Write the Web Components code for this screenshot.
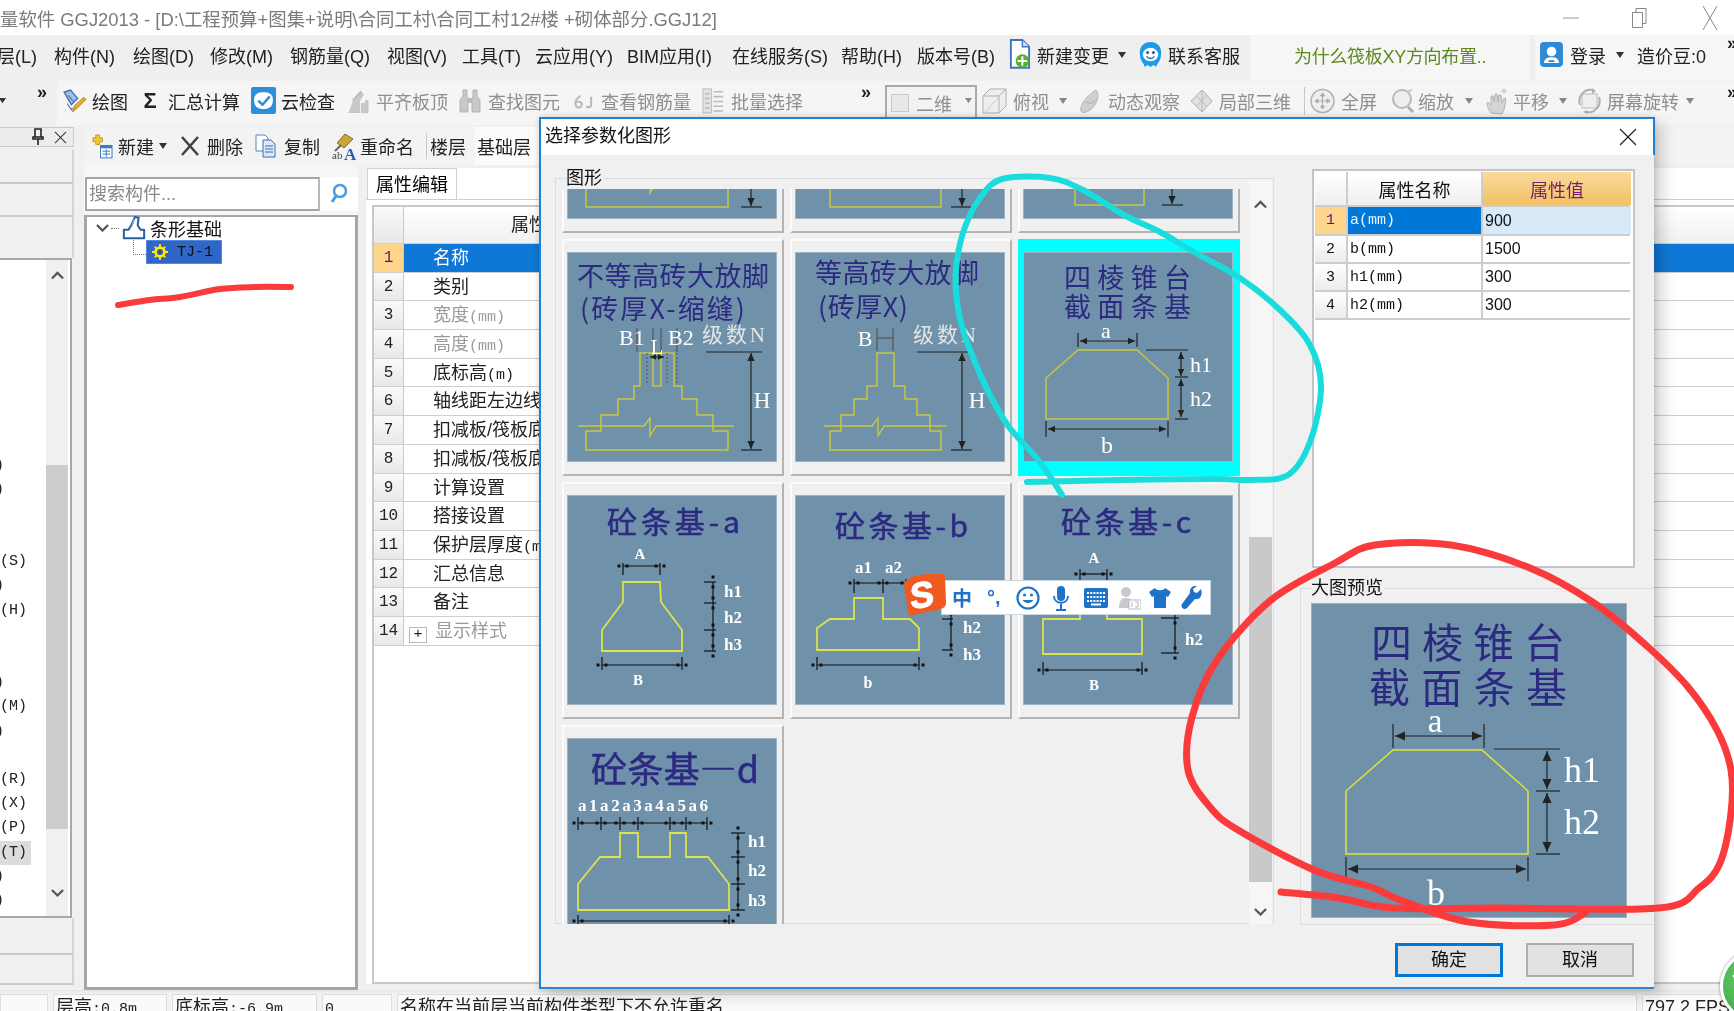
<!doctype html>
<html lang="zh"><head><meta charset="utf-8"><title>GGJ2013</title>
<style>html,body{margin:0;padding:0;height:100%;overflow:hidden;background:#f0f0f0;font:18px "Liberation Sans","Noto Sans CJK SC",sans-serif}</style>
</head><body><gg-app></gg-app>
<script>
const F='"Liberation Sans","Noto Sans CJK SC",sans-serif';
const MONO='"Liberation Mono","Noto Sans CJK SC",monospace';
const SERIF='"Liberation Serif","Noto Sans CJK SC",serif';
const CJK='"Noto Sans CJK SC",sans-serif';
const ICONS={
 caret:[8,6,'<path d="M0 0h8L4 6z" fill="#333"/>'],
 caretg:[8,6,'<path d="M0 0h8L4 6z" fill="#888"/>'],
 doc:[24,32,'<path d="M3 1h12l7 7v22H3z" fill="#fff" stroke="#3a78c0" stroke-width="2"/><path d="M15 1v7h7" fill="#cfe2f5" stroke="#3a78c0" stroke-width="1.5"/><circle cx="15" cy="23" r="7" fill="#58b030"/><path d="M15 18v10M10 23h10" stroke="#fff" stroke-width="2"/>'],
 service:[26,28,'<path d="M13 1C5 1 1 7 2 14c0 7 5 10 5 13l3-2 3 2 3-2 3 2c0-3 5-6 5-13C25 7 21 1 13 1z" fill="#1e9be8"/><ellipse cx="13" cy="14" rx="8" ry="7" fill="#fff"/><circle cx="10" cy="12" r="1.6" fill="#1565a8"/><circle cx="16" cy="12" r="1.6" fill="#1565a8"/><path d="M9 16c2 3 6 3 8 0" stroke="#1565a8" fill="none" stroke-width="1.4"/>'],
 login:[24,26,'<rect width="24" height="26" rx="4" fill="#2f8ad6"/><circle cx="12" cy="10" r="5" fill="#fff"/><path d="M4 22c1-5 4-6 8-6s7 1 8 6z" fill="#fff"/><path d="M9 20h6" stroke="#2f8ad6" stroke-width="2"/>'],
 draw:[24,24,'<path d="M2 3l6-2 7 8-6 6z" fill="#9fc0e8" stroke="#3a6ab0" stroke-width="1.2"/><path d="M6 6l5 6" stroke="#3a6ab0"/><path d="M5 14l4 6 1-2" stroke="#3a6ab0" fill="none"/><path d="M10 22l2-6 9-8 2 2-9 9z" fill="#e6ad2c" stroke="#a87610" stroke-width=".8"/>'],
 sigma:[16,24,'<text x="8" y="19" font-family="Liberation Sans" font-size="22" font-weight="700" text-anchor="middle" fill="#222">Σ</text>'],
 cloud:[24,26,'<rect width="24" height="26" rx="2" fill="#2b8fdc"/><rect x="3" y="5" width="18" height="16" rx="7" fill="#fff"/><path d="M7 13l4 4 7-8" stroke="#2b8fdc" stroke-width="2.4" fill="none"/>'],
 align:[24,26,'<path d="M2 25L8 9l6-7 3 4-4 7v12zM15 25V15h3v10zM19 25V12h3v13z" fill="#c9c9c9" stroke="#b5b5b5" stroke-width=".6"/><path d="M5 12l10-9" stroke="#aaa"/>'],
 binoc:[24,26,'<path d="M5 2h4v6l1 4v12H2V12l3-4zM15 2h4v6l3 4v12h-8V12l1-4z" fill="#c8c8c8" stroke="#aaa" stroke-width=".8"/><rect x="10" y="10" width="4" height="5" fill="#bbb"/>'],
 rebar:[24,24,'<path d="M9 6C4 9 3 13 4 16s5 3 6 0-2-5-5-3M20 7v8c0 3-3 4-5 2" fill="none" stroke="#b8b8b8" stroke-width="2"/>'],
 batch:[24,28,'<rect x="1" y="1" width="9" height="25" fill="#e2e2e2" stroke="#bbb"/><path d="M12 4h10M12 9h10M12 14h10M12 19h10M12 24h10M3 6h5M3 11h5M3 16h5M3 21h5" stroke="#bbb" stroke-width="1.6"/>'],
 square:[18,18,'<rect x=".5" y=".5" width="17" height="17" fill="#e8e8e8" stroke="#ccc"/>'],
 cube:[25,26,'<path d="M1 8l7-7h16v17l-7 7H1z" fill="#eee" stroke="#b0b0b0"/><path d="M1 8h16v17M17 8l7-7" fill="none" stroke="#b0b0b0"/><path d="M3 24l14-15" stroke="#ccc"/>'],
 orbit:[24,26,'<path d="M18 2c4 4 2 14-6 20-3 2-8 4-9 1-2-5 6-16 15-21z" fill="#d0d0d0" stroke="#b5b5b5"/><path d="M8 14c3 2 7 1 9-2" stroke="#aaa" fill="none"/>'],
 dia:[23,24,'<path d="M12 1l10 11-10 11L1 12z" fill="#e0e0e0" stroke="#b0b0b0"/><path d="M6 6l11 12M17 6L6 18M12 1v22" stroke="#bbb" fill="none"/>'],
 full:[25,26,'<circle cx="12.5" cy="13" r="11.5" fill="#eee" stroke="#b0b0b0" stroke-width="1.5"/><path d="M12.5 5v16M5 13h15M12.5 5l-2 3h4zM12.5 21l-2-3h4zM5 13l3-2v4zM20 13l-3-2v4z" fill="#bbb" stroke="#aaa"/>'],
 zoom:[25,26,'<circle cx="12" cy="11" r="9" fill="#eee" stroke="#b8b8b8" stroke-width="2"/><path d="M18 19l5 5" stroke="#b0b0b0" stroke-width="3"/><path d="M17 4l5-2" stroke="#ccc" stroke-width="2"/>'],
 pan:[25,28,'<path d="M6 26c-4-6-5-10-3-11l3 3V9l2 0 1 6 1-8h2l1 8 1-7h2l1 8 2-5 2 1-2 11-2 4z" fill="#d4d4d4" stroke="#b5b5b5"/><path d="M19 1v6M16 4h6" stroke="#bbb"/>'],
 rot:[25,26,'<rect x="5" y="6" width="15" height="14" fill="#eee" stroke="#bbb"/><path d="M3 17C0 8 8 0 16 2M22 9c3 9-5 17-13 15" fill="none" stroke="#b0b0b0" stroke-width="2"/><path d="M15 0l4 3-4 3zM10 22l-4 2 4 2z" fill="#b0b0b0"/>'],
 add:[24,28,'<path d="M3 5h3V2h4v3h3v4h-3v3H6V9H3z" fill="#f0c92c" stroke="#b08a10" stroke-width=".8"/><rect x="11" y="13" width="12" height="13" fill="#fff" stroke="#3a78c0"/><rect x="11" y="13" width="12" height="3" fill="#3a78c0"/><path d="M13 19h8M13 22h8M17 17v8" stroke="#3a78c0"/>'],
 del:[20,24,'<path d="M2 3l16 18M18 3L2 21" stroke="#444" stroke-width="2.6"/>'],
 copy:[21,24,'<path d="M1 1h9l3 3v13H1z" fill="#fff" stroke="#5a84b8"/><path d="M8 6h8l4 4v13H8z" fill="#dbe9f8" stroke="#3a6ab0"/><path d="M10 12h8M10 15h8M10 18h8" stroke="#3a6ab0"/>'],
 rename:[25,30,'<path d="M6 12l8-9 8 5-9 9z" fill="#c8a43a" stroke="#8a7020"/><path d="M4 20l6-6" stroke="#666" stroke-width="2"/><text x="1" y="28" font-size="11" font-family="Liberation Serif" fill="#444">ab</text><text x="13" y="29" font-size="17" font-family="Liberation Serif" font-weight="700" fill="#2a5fb0">A</text>'],
 search:[18,22,'<circle cx="10" cy="8" r="6" fill="none" stroke="#4c9de0" stroke-width="2.6"/><path d="M6 13l-4 6" stroke="#4c9de0" stroke-width="3"/>'],
 found:[26,26,'<path d="M14 1l4 1-1 8 3 5h4v9H2v-9h5l3-5z" fill="#fff" stroke="#2a5fa8" stroke-width="2.2" stroke-linejoin="round"/><path d="M13 3l-2 7" stroke="#7aa0d0" stroke-width="1.5"/>'],
 gear:[18,18,'<circle cx="9" cy="9" r="5" fill="none" stroke="#ffe800" stroke-width="3"/><path d="M9 0v4M9 14v4M0 9h4M14 9h4M3 3l3 3M12 12l3 3M15 3l-3 3M3 15l3-3" stroke="#ffe800" stroke-width="2"/><circle cx="9" cy="9" r="2" fill="#5a5020"/>'],
 pin:[12,18,'<path d="M3 1h6v8H3zM1 9h10v2H1zM6 11v6" stroke="#222" stroke-width="1.6" fill="#eee"/>'],
 x:[14,14,'<path d="M1 1l12 12M13 1L1 13" stroke="#333" stroke-width="1.1"/>'],
 chevU:[14,9,'<path d="M1 8l6-6 6 6" fill="none" stroke="#555" stroke-width="2.4"/>'],
 chevD:[14,9,'<path d="M1 1l6 6 6-6" fill="none" stroke="#555" stroke-width="2.4"/>'],
 none:[1,1,'']
};
function icon(n,w){const a=ICONS[n];const h=Math.round(w*a[1]/a[0]*10)/10;return `<svg xmlns="http://www.w3.org/2000/svg" width="${w}" height="${h}" viewBox="0 0 ${a[0]} ${a[1]}" style="flex:none;display:block">${a[2]}</svg>`}
function def(name,css,html,init){customElements.define(name,class extends HTMLElement{constructor(){super();this.attachShadow({mode:'open'});this.shadowRoot.innerHTML=`<style>${css}</style>`+(typeof html==='function'?html(this):html);}connectedCallback(){if(init&&!this._i){this._i=1;init(this)}}})}

customElements.define('gg-tool',class extends HTMLElement{constructor(){super();this.attachShadow({mode:'open'})}
 connectedCallback(){const n=this.getAttribute('icon'),iw=+this.getAttribute('iw')||24,g=this.getAttribute('gap')||5;
  this.shadowRoot.innerHTML=`<style>:host{display:inline-flex;align-items:center;flex:none;white-space:nowrap;height:100%;font:18px ${F};color:#222;gap:${g}px}:host([dis]){color:#8f8f8f}</style>${n?icon(n,iw):''}<slot></slot>`}});
function place(bar,list){let c=0;for(const it of list){const [x,w,ic,label,o={}]=it;const t=document.createElement('gg-tool');t.style.marginLeft=(x-c)+'px';t.style.width=w+'px';if(ic){t.setAttribute('icon',ic);t.setAttribute('iw',o.iw||24);if(o.gap!=null)t.setAttribute('gap',o.gap)}if(o.dis)t.setAttribute('dis','');if(o.style)t.style.cssText+=o.style;if(label)t.textContent=label;bar.appendChild(t);c=x+w}}

def('gg-bar',`:host{display:flex;align-items:center;overflow:hidden;flex:none;box-sizing:border-box}`,`<slot></slot>`);

def('gg-titlebar',`:host{display:flex;align-items:center;height:35px;background:#fff;flex:none;overflow:hidden;position:relative}
 .t{font:18.4px ${F};color:#7b7b7b;white-space:nowrap;margin-top:0}
 .w{margin-left:auto;display:flex;align-items:center}
 .c{width:70px;display:flex;justify-content:center}`,
 `<div class="t">量软件 GGJ2013 - [D:\\工程预算+图集+说明\\合同工村\\合同工村12#楼 +砌体部分.GGJ12]</div>
 <div class="w"><div class="c"><svg width="16" height="2"><path d="M0 1h16" stroke="#999"/></svg></div>
 <div class="c" style="margin-left:-1px"><svg width="16" height="24"><path d="M.5 6.500h10v15H.5zM4 6V2.500h10v15h-3" fill="none" stroke="#888"/></svg></div>
 <div class="c" style="margin-right:-11px"><svg width="16" height="26"><path d="M1 1l14 24M15 1L1 25" stroke="#888"/></svg></div></div>`);

def('gg-app',`:host{display:flex;flex-direction:column;width:1734px;height:1011px;position:relative;overflow:hidden;background:#f0f0f0;font:18px ${F};filter:blur(.35px)}
 .main{display:flex;height:865px;flex:none}
 .right{margin-left:10px;flex:1;display:flex;flex-direction:column;min-width:0}
 .work{display:flex;flex:1;min-height:0}
 gg-tree{width:274px}
 gg-props{flex:1;margin-left:8px;min-width:0}
 #menu{height:45px;padding-bottom:6px;background:linear-gradient(90deg,#efefef 1250px,#f6f6f6 1250px,#f6f6f6 1530px,#efefef 1530px,#efefef 1535px,#f6f6f6 1535px)}
 #tb1{height:44px;margin-top:1px;padding-bottom:4px;background:linear-gradient(90deg,#efefef 57px,#f5f5f5 57px)}
 #tb2{height:38px;margin-top:2px;background:#f3f3f3}`,
 `<gg-titlebar></gg-titlebar>
 <gg-bar id="menu"></gg-bar>
 <gg-bar id="tb1"></gg-bar>
 <div class="main"><gg-left></gg-left><div class="right"><gg-bar id="tb2"></gg-bar><div class="work"><gg-tree></gg-tree><gg-props></gg-props></div></div></div>
 <gg-status></gg-status>
 <gg-dialog></gg-dialog>
 <gg-ink></gg-ink>
 <gg-ime></gg-ime>
 <gg-badge></gg-badge>`,
 h=>{const s=h.shadowRoot;
  place(s.getElementById('menu'),[
   [-21,61,null,'楼层(L)'],[54,64,null,'构件(N)'],[133,62,null,'绘图(D)'],[210,65,null,'修改(M)'],[290,81,null,'钢筋量(Q)'],[387,59,null,'视图(V)'],[462,58,null,'工具(T)'],[535,76,null,'云应用(Y)'],[627,89,null,'BIM应用(I)'],[732,94,null,'在线服务(S)'],[841,61,null,'帮助(H)'],[917,78,null,'版本号(B)'],
   [1008,104,'doc','新建变更',{iw:23,gap:6}],[1118,8,'caret','',{iw:8}],[1138,104,'service','联系客服',{iw:25,gap:5}],
   [1294,194,null,'为什么筏板XY方向布置..',{style:'color:#5c8a1c;letter-spacing:-.3px'}],
   [1540,68,'login','登录',{iw:23,gap:7}],[1616,8,'caret','',{iw:8}],[1637,72,null,'造价豆:0'],[1727,10,null,'»',{style:'font-weight:700;margin-top:-22px'}]
  ]);
  const d={dis:1};
  place(s.getElementById('tb1'),[
   [-1,8,'caret','',{iw:7}],[37,10,null,'»',{style:'font-weight:700;margin-top:-18px'}],
   [62,66,'draw','绘图',{iw:25}],[142,100,'sigma','汇总计算',{iw:16,gap:10}],[251,86,'cloud','云检查',{iw:25}],
   [347,102,'align','平齐板顶',{...d,iw:23,gap:6}],[458,104,'binoc','查找图元',{...d,gap:6}],[572,120,'rebar','查看钢筋量',{...d,iw:23,gap:6}],[702,102,'batch','批量选择',{...d,iw:23,gap:6}],
   [861,10,null,'»',{style:'font-weight:700;margin-top:-18px'}],
   [885,92,'square','二维',{...d,iw:18,gap:7,style:'border:2px solid #aaa;box-sizing:border-box;height:34px;align-self:flex-start;margin-top:4px;background:#f3f3f3;padding-left:4px;border-bottom:none'}],
   [965,8,'caretg','',{iw:7}],
   [982,70,'cube','俯视',{...d,iw:25,gap:6}],[1059,8,'caretg','',{iw:8}],[1078,102,'orbit','动态观察',{...d,gap:6}],[1190,102,'dia','局部三维',{...d,iw:23,gap:6}],
   [1304,1,null,'',{style:'background:#c8c8c8;height:28px;align-self:center'}],
   [1310,68,'full','全屏',{...d,iw:25,gap:6}],[1390,65,'zoom','缩放',{...d,iw:25,gap:3}],[1465,8,'caretg','',{iw:8}],[1485,63,'pan','平移',{...d,iw:25,gap:3}],[1559,8,'caretg','',{iw:8}],[1577,103,'rot','屏幕旋转',{...d,iw:25,gap:5}],[1686,8,'caretg','',{iw:8}],[1727,10,null,'»',{style:'font-weight:700;margin-top:-18px'}]
  ]);
  place(s.getElementById('tb2'),[
   [6,71,'add','新建',{iw:23,gap:5}],[75,8,'caret','',{iw:8}],[96,60,'del','删除',{iw:20,gap:7}],[171,65,'copy','复制',{iw:21,gap:8}],[247,84,'rename','重命名',{iw:25,gap:4}],
   [342,1,null,'',{style:'background:#c8c8c8;height:26px;align-self:center'}],[346,36,null,'楼层'],[391,64,null,'基础层',{style:'background:#fbfbfb;padding-left:2px;box-sizing:border-box'}]
  ]);
 });

def('gg-left',`:host{display:flex;flex-direction:column;width:74px;flex:none}
 .title{height:20px;margin-top:2px;display:flex;align-items:center;justify-content:flex-end;gap:10px;padding-right:6px;border:1px solid #c8c8c8;border-left:none;box-sizing:border-box;background:#ededed}
 .r{border-bottom:2px solid #c9c9c9;box-sizing:border-box;background:#f1f1f1;border-right:2px solid #d5d5d5}
 .list{height:660px;display:flex;background:#fff;border:2px solid #a8a8a8;border-left:none;box-sizing:border-box;width:72px;flex:none;overflow:hidden}
 .rows{width:46px;flex:none;overflow:hidden;font:15px ${MONO};color:#222}
 .row{height:24.2px;line-height:24.2px;white-space:nowrap}
 .row.sel{background:#dcdcdc;width:31px}
 .bar{width:22px;background:#f0f0f0;display:flex;flex-direction:column;align-items:center}
 .thumb{width:100%;height:364px;background:#cdcdcd;margin-top:186px}`,
 ()=>{const m={8:')',9:')',12:'(S)',13:')',14:'(H)',17:')',18:'(M)',19:')',21:'(R)',22:'(X)',23:'(P)',24:'(T)',25:')',26:')'};
  let rows='';for(let i=0;i<27;i++){const t=m[i]||'';rows+=`<div class="row${i==24?' sel':''}" style="${t==')'?'margin-left:-5px':''}">${t}</div>`}
  return `<div class="title">${icon('pin',12)}${icon('x',13)}</div>
  <div class="r" style="height:34px;margin-top:3px"></div><div class="r" style="height:33px"></div><div class="r" style="height:41px;border-bottom:none"></div>
  <div class="list"><div class="rows">${rows}</div><div class="bar"><div style="margin-top:11px">${icon('chevU',13)}</div><div class="thumb"></div><div style="margin-top:60px">${icon('chevD',13)}</div></div></div>
  <div class="r" style="height:37px"></div><div class="r" style="height:30px"></div>`});

def('gg-tree',`:host{display:flex;flex-direction:column;padding-top:12px;box-sizing:border-box;flex:none;background:#f6f6f6}
 .s{display:flex;height:34px;background:#fff;align-items:center;flex:none}
 .in{width:235px;height:34px;margin-left:1px;box-sizing:border-box;border:2px solid #a4a4a4;border-right-color:#b8b8b8;display:flex;align-items:center;padding:0 0 5px 2px;color:#8a8a8a;font:18px ${F}}
 .mg{margin-left:10px}
 .box{flex:1;margin-top:4px;border:3px solid #a6a6a6;border-top-width:2px;background:#fff;box-sizing:border-box;font:18px ${F};color:#111}
 .r1{display:flex;align-items:center;height:24px;margin-left:9px;margin-top:-1px}
 .ch{width:13px}
 .dots{width:8px;border-top:1px dotted #777;margin:0 2px}
 .r2{display:flex;margin-left:46px;height:24px}
 .el{width:12px;height:14px;border-left:1px dotted #777;border-bottom:1px dotted #777}
 .sel{width:76px;height:24px;background:#2f66c8;box-sizing:border-box;border:1px solid #5587de;display:flex;align-items:center;padding-left:5px;gap:9px;color:#111;font:15px ${MONO}}`,
 `<div class="s"><div class="in">搜索构件...</div><div class="mg">${icon('search',18)}</div></div>
 <div class="box"><div class="r1"><div class="ch">${icon('chevD',13)}</div><div class="dots"></div><div style="margin-left:1px">${icon('found',24)}</div><div style="margin-left:4px">条形基础</div></div>
 <div class="r2"><div class="el"></div><div class="sel">${icon('gear',16)}<span>TJ-1</span></div></div></div>`);

def('gg-props',`:host{display:flex;flex-direction:column;background:#fff;margin-top:3px;margin-bottom:6px;position:relative}
 .tab{height:32px;flex:none;display:flex;border-bottom:1px solid #cfcfcf;background:#f4f4f4;box-sizing:border-box}
 .tab b{font:18px ${F};width:90px;margin-left:1px;box-sizing:border-box;text-align:center;line-height:32px;background:#fff;border:1px solid #d0d0d0;border-bottom:none}
 .rest{flex:1;background:#fff}
 .box{flex:1;margin:5px 0 0 6px;border:2px solid #c8c8c8;border-right:none;background:#fff;font:18px ${F};color:#222}
 .r{display:flex;height:28.7px;box-sizing:border-box;border-bottom:1px solid #cfcfcf}
 .h{width:29px;flex:none;background:linear-gradient(#fafafa,#e8e8e8);text-align:center;font:16px/28px ${MONO};border-right:1px solid #c8c8c8}
 .c{flex:1;padding-left:29px;line-height:28px;white-space:nowrap;position:relative}
 .r.head{height:37px}.r.head .c{padding-left:107px;line-height:37px;background:linear-gradient(#fff,#f0f0f0)}
 .r.sel .h{background:#fdd58b;color:#6a0f6a}.r.sel .c{background:#0f78d6;color:#fff}
 .g{color:#9a9a9a}
 .pl{display:inline-block;width:18px;height:16px;border:1px solid #b8b8b8;box-sizing:border-box;text-align:center;font:15px/13px ${MONO};margin:0 8px 0 -24px;color:#222;vertical-align:-1px}
 .m{font:15px ${MONO};color:inherit}`,
 ()=>{const rows=[['名称'],['类别'],['宽度<span class="m">(mm)</span>',1],['高度<span class="m">(mm)</span>',1],['底标高<span class="m">(m)</span>'],['轴线距左边线距离'],['扣减板/筏板底筋'],['扣减板/筏板底筋'],['计算设置'],['搭接设置'],['保护层厚度<span class="m">(mm)</span>'],['汇总信息'],['备注'],['<span class="pl">+</span>显示样式',1]];
  return `<div class="tab"><b>属性编辑</b><div class="rest"></div></div><div class="box"><div class="r head"><div class="h"></div><div class="c">属性名称</div></div>`+rows.map((r,i)=>`<div class="r${i==0?' sel':''}"><div class="h">${i+1}</div><div class="c${r[1]?' g':''}">${r[0]}</div></div>`).join('')+`</div>`});

def('gg-status',`:host{display:flex;height:21px;flex:none;overflow:hidden;background:linear-gradient(#e6e6e6,#f2f2f2 4px);padding-top:4px;box-sizing:border-box;font:18px ${F};color:#222;gap:5px}
 .c{background:#fafafa;border:1px solid #ddd;border-bottom:none;box-sizing:border-box;height:30px;white-space:nowrap;overflow:hidden;padding:0 0 0 2px;line-height:24px;flex:none}
 .m{font:15px ${MONO}}`,
 `<div class="c" style="width:48px"></div><div class="c" style="width:114px">层高<span class="m">:0.8m</span></div><div class="c" style="width:145px">底标高<span class="m">:-6.9m</span></div><div class="c" style="width:70px"><span class="m">0</span></div><div class="c" style="width:1240px">名称在当前层当前构件类型下不允许重名</div><div class="c" style="flex:1;font:15px/24px ${MONO};letter-spacing:.4px">797.2 FPS</div>`);

const num=v=>Math.round(v*100)/100;
const line=(x1,y1,x2,y2,c='#222',w=1.2)=>`<line x1="${x1}" y1="${y1}" x2="${x2}" y2="${y2}" stroke="${c}" stroke-width="${w}"/>`;
const poly=(p,c,w=1.5,cl=true)=>`<${cl?'polygon':'polyline'} points="${p.map(a=>a.join(',')).join(' ')}" fill="none" stroke="${c}" stroke-width="${w}" stroke-linejoin="miter"/>`;
const tri=(x,y,dir,s=7,c='#222')=>{const h=s/2.2;return `<path fill="${c}" d="${dir=='u'?`M${x} ${y}l${-h} ${s}h${2*h}z`:dir=='d'?`M${x} ${y}l${-h} ${-s}h${2*h}z`:dir=='l'?`M${x} ${y}l${s} ${-h}v${2*h}z`:`M${x} ${y}l${-s} ${-h}v${2*h}z`}"/>`};
const vdim=(x,a,b,s=7,c='#222')=>line(x,a,x,b,c)+tri(x,a,'u',s,c)+tri(x,b,'d',s,c);
const hdim=(y,a,b,s=7,c='#222')=>line(a,y,b,y,c)+tri(a,y,'l',s,c)+tri(b,y,'r',s,c);
const sq=(x,y,s=3)=>`<rect x="${x-s/2}" y="${y-s/2}" width="${s}" height="${s}" fill="#111"/>`;
const sv=(x,a,b,ticks,x1,x2)=>line(x,a,x,b,'#111')+ticks.map(t=>line(x1,t,x2,t,'#111')+sq(x,t+5)+sq(x,t-5)).join('');
const sh=(y,ticks,a,b)=>line(ticks[0],y,ticks[ticks.length-1],y,'#111')+ticks.map(t=>line(t,a,t,b,'#111')+sq(t+4,y)+sq(t-4,y)).join('');
const txt=(x,y,s,o={})=>`<text x="${x}" y="${y}" font-size="${o.s||18}" fill="${o.c||'#fff'}" font-family='${o.f||SERIF}' text-anchor="${o.a||'middle'}" dominant-baseline="central" ${o.b?'font-weight="700"':''} ${o.st?`stroke="${o.c}" stroke-width="${o.st}"`:''} ${o.len?`textLength="${o.len}" lengthAdjust="spacing"`:''}>${s}</text>`;
const ttl=(a,b,y,s,size,w)=>txt(a,y-3.5,s,{s:size,c:'#2c2a80',f:CJK,a:'start',len:b-a,st:w?.55:0});
const Y1='#c6c842',Y2='#dbe24c',Y3='#e2e23a';
const steps1=[[73,101],[73,134],[67,134],[67,147],[51,147],[51,163],[34,163],[34,179],[19,179],[19,198],[161,198],[161,179],[146,179],[146,163],[130,163],[130,147],[115,147],[115,134],[107,134],[107,101]];
const steps2=[[82,101],[82,134],[72,134],[72,147],[59,147],[59,163],[46,163],[46,179],[35,179],[35,198],[146,198],[146,179],[135,179],[135,163],[122,163],[122,147],[110,147],[110,134],[99,134],[99,101]];
const FIG={
 a:()=>ttl(10,202,26,'不等高砖大放脚',27)+ttl(13,178,59,'(砖厚X-缩缝)',27)
  +poly(steps1,Y1)+poly([[86,101],[86,134],[94,134],[94,101]],Y1)
  +poly([[11,174],[77,174],[83,166],[83,184],[89,174],[167,174]],Y1,1.4,false)
  +line(70,100,70,76,'#555')+line(86,100,86,76,'#555')+line(94,100,94,76,'#555')+line(110,100,110,76,'#555')
  +`<path d="M80 101l0 32M100 101v32M110 101v32" stroke="#555" stroke-dasharray="2 2"/>`
  +txt(52,85,'B1',{s:22,a:'start'})+txt(90,95,'L',{s:21})+txt(101,85,'B2',{s:22,a:'start'})+hdim(105,83,97,6)
  +txt(135,83,'级数N',{s:21,a:'start',c:'#e4e4e4',len:63})
  +line(139,100,195,100)+vdim(184,101,197,8)+line(174,198,195,198)+txt(195,148,'H',{s:23}),
 b:()=>ttl(20,184,23,'等高砖大放脚',27)+ttl(23,113,57,'(砖厚X)',27)
  +poly(steps2,Y1)+poly([[29,174],[77,174],[83,166],[83,184],[89,174],[152,174]],Y1,1.4,false)
  +line(82,76,82,99,'#555')+line(98,76,98,99,'#555')+line(82,86,98,86,'#555')+txt(70,86,'B',{s:22})
  +txt(118,83,'级数N',{s:21,a:'start',c:'#e4e4e4',len:63})
  +line(122,100,175,100)+vdim(167,101,197,8)+line(156,198,177,198)+txt(182,148,'H',{s:23}),
 c:()=>ttl(41,168,28,'四棱锥台',27)+ttl(41,168,57,'截面条基',27)
  +poly([[55,98],[114,98],[145,126],[145,167],[23,167],[23,126]],Y1)
  +txt(83,78,'a',{s:22})+line(55,81,55,95)+line(114,81,114,95)+hdim(89,57,112,7)
  +line(123,98,165,98)+line(152,125,165,125)+line(152,167,165,167)+vdim(158,100,124,7)+vdim(158,127,165,7)
  +txt(167,112,'h1',{s:22,a:'start'})+txt(167,146,'h2',{s:22,a:'start'})
  +line(23,169,23,185)+line(145,169,145,185)+hdim(177,25,143,7)+txt(84,193,'b',{s:24}),
 d:()=>ttl(40,173,28,'砼条基-a',30,1)
  +poly([[56,87],[93,87],[94,107],[115,135],[115,156],[35,156],[35,135],[56,107]],Y2,1.8)
  +txt(73,59,'A',{s:15,b:1})+sh(71,[56,93],68,80)
  +sv(146,87,156,[87,108,135,156],137,149)
  +txt(157,96,'h1',{s:17,b:1,a:'start'})+txt(157,122,'h2',{s:17,b:1,a:'start'})+txt(157,149,'h3',{s:17,b:1,a:'start'})
  +sh(170,[35,115],162,175)+txt(71,185,'B',{s:15,b:1}),
 e:()=>ttl(40,173,32,'砼条基-b',30,1)
  +poly([[59,103],[88,103],[88,124],[115,124],[124,133],[124,155],[22,155],[22,133],[35,124],[59,124]],Y2,1.8)
  +txt(60,72,'a1',{s:17,b:1,a:'start'})+txt(90,72,'a2',{s:17,b:1,a:'start'})+sh(88,[59,88,111],84,98)
  +sv(156,103,155,[103,124,155],147,158)+txt(168,105,'h1',{s:17,b:1,a:'start'})+txt(168,132,'h2',{s:17,b:1,a:'start'})+txt(168,159,'h3',{s:17,b:1,a:'start'})
  +sh(170,[22,124],162,175)+txt(73,187,'b',{s:16,b:1}),
 f:()=>ttl(38,168,28,'砼条基-c',30,1)
  +poly([[57,88],[84,88],[84,124],[119,124],[119,159],[20,159],[20,124],[57,124]],Y2,1.8)
  +txt(71,63,'A',{s:15,b:1})+sh(79,[57,84],74,86)
  +sv(152,88,158,[123,158],138,156)+txt(162,144,'h2',{s:17,b:1,a:'start'})
  +sh(175,[20,119],167,180)+txt(71,190,'B',{s:15,b:1}),
 g:()=>ttl(24,192,32,'砼条基—d',36,1)
  +poly([[11,146],[33,119],[53,119],[53,95],[71,95],[71,119],[103,119],[103,95],[119,95],[119,119],[141,119],[162,146],[162,172],[11,172]],Y2,1.8)
  +txt(11,67,'a1a2a3a4a5a6',{s:17,b:1,a:'start',len:130})+sh(85,[11,34,53,71,103,119,140],79,92)
  +sv(171,95,172,[95,119,146,172],164,178)
  +txt(181,103,'h1',{s:17,b:1,a:'start'})+txt(181,132,'h2',{s:17,b:1,a:'start'})+txt(181,162,'h3',{s:17,b:1,a:'start'})
  +sh(183,[11,162],177,190),
 a0:()=>poly(steps1,Y1)+poly([[11,174],[77,174],[83,166],[83,184],[89,174],[167,174]],Y1,1.4,false)+vdim(184,101,197,8)+line(174,198,195,198),
 b0:()=>poly(steps2,Y1)+vdim(167,101,197,8)+line(156,198,177,198),
 c0:()=>poly([[52,170],[121,170],[121,196],[52,196]],Y1)+vdim(149,170,195,8)+line(139,196,160,196),
 prev:()=>ttl(60,254,40,'四棱锥台',41)+ttl(58,256,85,'截面条基',41)
  +poly([[82,147],[171,147],[217,188],[217,251],[35,251],[35,188]],Y3,1.5)
  +txt(124,118,'a',{s:33})+line(82,121,82,145)+line(173,121,173,145)+hdim(133,84,171,10)
  +line(183,146,249,146)+line(225,188,249,188)+line(225,251,249,251)+vdim(236,148,186,10)+vdim(236,190,249,10)
  +txt(253,167,'h1',{s:36,a:'start'})+txt(253,219,'h2',{s:36,a:'start'})
  +line(35,254,35,278)+line(217,254,217,278)+hdim(266,37,215,10)+txt(125,290,'b',{s:36})
};
customElements.define('gg-figure',class extends HTMLElement{constructor(){super();this.attachShadow({mode:'open'})}
 connectedCallback(){const k=this.getAttribute('kind'),w=+this.getAttribute('w')||210,h=+this.getAttribute('h')||210;
  this.shadowRoot.innerHTML=`<style>:host{display:block;width:${w}px;height:${h}px;flex:none;background:#6f92aa;outline:1px solid #9fb3c2;outline-offset:-1px}svg{display:block}</style><svg xmlns="http://www.w3.org/2000/svg" width="${w}" height="${h}" viewBox="0 0 ${w} ${h}">${FIG[k]()}</svg>`}});
def('gg-card',`:host{display:block;box-sizing:border-box;height:237px;padding:11px 5px 0 3px;background:#f0f0f0;border:2px solid #fbfbfb;border-right-color:#b4b4b4;border-bottom-color:#b4b4b4}
 :host([sel]){background:#00ffff;border-color:#00ffff;}`,`<slot></slot>`);
def('gg-group',`:host{display:block;box-sizing:border-box;border:1px solid #dcdcdc;position:relative}
 .l{position:absolute;left:10px;top:-11px;background:#f0f0f0;font:18px/20px ${F};color:#111;padding-right:2px}`,
 h=>`<div class="l">${h.getAttribute('label')}</div><slot></slot>`);

def('gg-dialog',`:host{position:absolute;left:539px;top:117px;width:1115px;height:872px;background:#f0f0f0;border-left:2px solid #1d82d6;border-bottom:2px solid #2a86d0;box-sizing:border-box;box-shadow:8px 6px 14px rgba(0,0,0,.18),0 0 6px rgba(0,0,0,.15);display:flex;flex-direction:column;font:18px ${F};color:#111}
 .tb{height:38px;flex:none;background:#fff;border-top:2px solid #1d82d6;border-right:2px solid #1d82d6;box-sizing:border-box;display:flex;align-items:center;justify-content:space-between;padding:0 16px 6px 4px;margin-right:-1px}
 .tb svg{margin-top:6px}
 .body{display:flex;flex:1;min-height:0;padding-left:14px}
 .leftc{width:719px;flex:none}
 .g1{height:746px;margin-top:23px;padding:10px 0 0 6px;display:flex}
 .view{width:683px;height:735px;overflow:hidden;flex:none}
 .grid{display:grid;grid-template-columns:repeat(3,222px);grid-auto-rows:237px;gap:6px;margin-top:-193px}
 .sb{width:23px;margin-left:4px;margin-top:-9px;height:744px;flex:none;background:#f6f6f6;display:flex;flex-direction:column;align-items:center}
 .thumb{width:100%;height:345px;margin-top:309px;background:#c9c9c9;flex:none}
 .rightc{margin-left:26px;width:354px;flex:none;display:flex;flex-direction:column}
 .g2{height:337px;margin-top:20px;padding:14px 0 0 10px;border-right:none}
 .btns{display:flex;justify-content:flex-end;gap:23px;margin-top:18px;padding-right:20px}
 .btn{width:108px;height:34px;box-sizing:border-box;background:#e1e1e1;border:2px solid #adadad;text-align:center;line-height:30px;font-size:18px}
 .btn.ok{border:3px solid #0078d7;line-height:28px}`,
 `<div class="tb"><span>选择参数化图形</span><svg width="18" height="18"><path d="M1 1l16 16M17 1L1 17" stroke="#222" stroke-width="1.2"/></svg></div>
 <div class="body"><div class="leftc"><gg-group label="图形" class="g1"><div class="view"><div class="grid">
  <gg-card><gg-figure kind="a0"></gg-figure></gg-card><gg-card><gg-figure kind="b0"></gg-figure></gg-card><gg-card><gg-figure kind="c0"></gg-figure></gg-card>
  <gg-card><gg-figure kind="a"></gg-figure></gg-card><gg-card><gg-figure kind="b"></gg-figure></gg-card><gg-card sel><gg-figure kind="c"></gg-figure></gg-card>
  <gg-card><gg-figure kind="d"></gg-figure></gg-card><gg-card><gg-figure kind="e"></gg-figure></gg-card><gg-card><gg-figure kind="f"></gg-figure></gg-card>
  <gg-card><gg-figure kind="g"></gg-figure></gg-card>
 </div></div><div class="sb"><div style="height:48px;display:flex;align-items:center">${icon('chevU',13)}</div><div class="thumb"></div><div style="margin-top:26px">${icon('chevD',13)}</div></div></gg-group></div>
 <div class="rightc"><gg-ptable></gg-ptable><gg-group label="大图预览" class="g2"><gg-figure kind="prev" w="316" h="315"></gg-figure></gg-group>
 <div class="btns"><div class="btn ok">确定</div><div class="btn">取消</div></div></div></div>`);

def('gg-ptable',`:host{display:block;height:399px;width:323px;margin:14px 0 0 12px;box-sizing:border-box;background:#fff;border:2px solid #c2c4cc;padding:1px 3px 0 1px;flex:none;font:16px ${F};color:#111}
 .g{display:grid;grid-template-columns:31px 133px 148px;gap:2px;background:#cdcdcd;padding-bottom:2px;grid-template-rows:33px 27px 26px 26px 26px}
 .c{background:#fff;display:flex;align-items:center;padding-left:2px;white-space:nowrap}
 .m{font:15px ${MONO}}
 .hd{background:linear-gradient(#fff,#efefef);justify-content:center;padding:0;font:18px ${F}}
 .v{background:linear-gradient(#fad99a,#f0c266);color:#7a1a6a}
 .rh{background:linear-gradient(#fff,#ebebeb);justify-content:center;padding:0;font:15px ${MONO}}
 .s1{background:#fdd58b;color:#6a0f6a}.s2{background:#0078d7;color:#e8f4ff}.s3{background:#d8e9f7}`,
 `<div class="g"><div class="c hd"></div><div class="c hd">属性名称</div><div class="c hd v">属性值</div>
 <div class="c rh s1">1</div><div class="c m s2">a(mm)</div><div class="c s3">900</div>
 <div class="c rh">2</div><div class="c m">b(mm)</div><div class="c">1500</div>
 <div class="c rh">3</div><div class="c m">h1(mm)</div><div class="c">300</div>
 <div class="c rh">4</div><div class="c m">h2(mm)</div><div class="c">300</div></div>`);

def('gg-ime',`:host{position:absolute;left:903px;top:575px;width:308px;height:41px;display:block;font:700 20px ${F};color:#1e72c8}
 .bar{position:absolute;left:38px;right:0;top:5px;height:35px;background:#fff;border:1px solid #c9d6e4;box-sizing:border-box;display:flex;align-items:center;padding-left:10px}
 .bar>*{flex:none}
 .logo{position:absolute;left:-2px;top:-1px}`,
 `<div class="bar"><span style="width:35px">中</span><span style="width:29px;font-size:20px">°,</span>
 <svg width="24" height="24" viewBox="0 0 24 24" style="margin-right:12px"><circle cx="12" cy="12" r="10.500" fill="#fff" stroke="#1e72c8" stroke-width="2.200"/><circle cx="8.500" cy="9" r="1.500" fill="#1e72c8"/><circle cx="15.500" cy="9" r="1.500" fill="#1e72c8"/><path d="M6.500 14c3 4 8 4 11 0z" fill="#1e72c8"/></svg>
 <svg width="18" height="26" viewBox="0 0 18 26" style="margin-right:14px"><rect x="5" y="1" width="8" height="15" rx="4" fill="#1e72c8"/><path d="M2 11c0 9 14 9 14 0M9 19v5M4 25h10" fill="none" stroke="#1e72c8" stroke-width="2"/></svg>
 <svg width="24" height="20" viewBox="0 0 24 20" style="margin-right:9px"><rect width="24" height="20" rx="2" fill="#1e72c8"/><path d="M3 5h18M3 9h18M3 13h18" stroke="#fff" stroke-width="2" stroke-dasharray="2 1.200"/><path d="M7 16.500h10" stroke="#fff" stroke-width="2"/></svg>
 <svg width="24" height="24" viewBox="0 0 24 24" style="margin-right:8px"><circle cx="9" cy="6" r="5" fill="#c6c9cf"/><path d="M2 22c0-8 3-10 7-10s5 1 6 3v7z" fill="#c6c9cf"/><rect x="12" y="14" width="12" height="9" fill="#fff" stroke="#b8bcc4"/><path d="M15 16v5M18 16h3v5h-3" stroke="#b0b4bc" fill="none"/></svg>
 <svg width="22" height="22" viewBox="0 0 22 22" style="margin-right:10px"><path d="M6 1L0 5l3 5 2-1v12h12V9l2 1 3-5-6-4c-1 3-9 3-10 0z" fill="#1e72c8"/></svg>
 <svg width="22" height="24" viewBox="0 0 22 24"><path d="M20 3l-4 4-3-1-1-3 4-3c-4-1-8 2-7 7L1 18c-2 3 2 7 5 4l8-9c5 1 8-4 6-10z" fill="#1e72c8"/></svg></div>
 <svg class="logo" width="46" height="44" viewBox="0 0 46 44"><path d="M13 2l26-4c3 0 5 2 5 5l1 26c0 3-2 5-5 6l-28 6c-3 1-5-1-5-4L3 11c0-3 2-5 5-6z" fill="#ee5a20"/><text x="23" y="33" font-family="Liberation Sans" font-weight="700" font-size="36" fill="#fff" text-anchor="middle" stroke="#fff" stroke-width="1.2" transform="rotate(-8 23 20) skewX(-6)">S</text></svg>`);

def('gg-badge',`:host{position:absolute;left:1720px;top:950px;width:72px;height:72px;border-radius:50%;background:radial-gradient(circle at 40% 40%,#6fd26a,#2a9a3c);border:3px solid #fff;box-sizing:border-box;box-shadow:0 0 3px rgba(0,0,0,.5);display:block;font:700 20px ${F};color:#fff;padding:18px 0 0 9px}`,`7`);

function smooth(p){let d=`M${p[0][0]} ${p[0][1]}`;for(let i=0;i<p.length-1;i++){const a=p[i-1]||p[i],b=p[i],c=p[i+1],e=p[i+2]||c;d+=`C${num(b[0]+(c[0]-a[0])/6)} ${num(b[1]+(c[1]-a[1])/6)} ${num(c[0]-(e[0]-b[0])/6)} ${num(c[1]-(e[1]-b[1])/6)} ${c[0]} ${c[1]}`}return d}
const CY=[[1062,495],[1040,462],[1009,427],[990,395],[977,367],[963,330],[956,293],[957,260],[965,227],[980,198],[1002,179],[1050,178],[1083,190],[1124,215],[1160,232],[1194,252],[1240,278],[1280,310],[1310,345],[1321,387],[1310,442],[1288,475],[1250,480],[1216,479],[1120,480],[1027,482]];
const RD=[[1281,892],[1339,898],[1393,908],[1500,908],[1659,908],[1699,888],[1720,863],[1731,813],[1731,770],[1717,730],[1688,687],[1648,647],[1594,603],[1530,568],[1451,545],[1375,545],[1335,563],[1271,600],[1217,660],[1192,717],[1188,770],[1210,807],[1238,830],[1314,870],[1371,887],[1400,900],[1469,922],[1555,925],[1585,913]];
const RL=[[118,305],[150,300],[180,297],[220,289],[255,287],[291,287]];
def('gg-ink',`:host{position:absolute;left:0;top:0;width:1734px;height:1011px;display:block;pointer-events:none}svg{display:block}`,
 `<svg xmlns="http://www.w3.org/2000/svg" width="1734" height="1011"><g fill="none" stroke-linecap="round" stroke-linejoin="round"><path d="${smooth(CY)}" stroke="#1bdcdc" stroke-width="6"/><path d="${smooth(RD)}" stroke="#fb3a3c" stroke-width="7"/><path d="${smooth(RL)}" stroke="#fb3a3c" stroke-width="6"/></g></svg>`);
</script></body></html>
